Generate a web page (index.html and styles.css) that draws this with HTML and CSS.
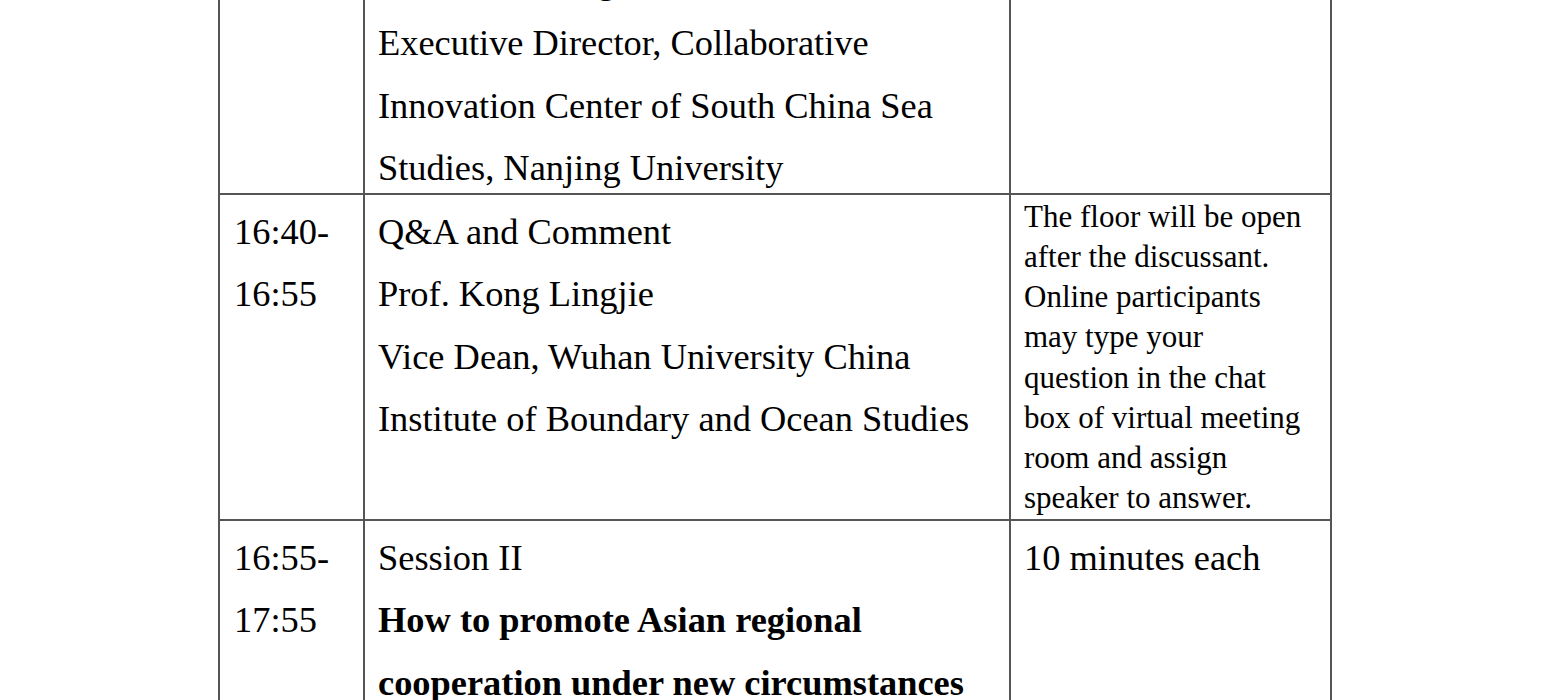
FILE: index.html
```html
<!DOCTYPE html>
<html lang="en">
<head>
<meta charset="utf-8">
<title>Programme</title>
<link rel="stylesheet" href="styles.css">
</head>
<body>
<table class="agenda">
  <colgroup>
    <col class="c-time">
    <col class="c-main">
    <col class="c-note">
  </colgroup>
  <tr>
    <td class="time"><div class="lines">16:25-<br>16:40</div></td>
    <td class="main"><div class="lines">
      <p>Comment by Discussant</p>
      <p>Prof. ZHU Feng</p>
      <p>Executive Director, Collaborative Innovation Center of South China Sea Studies, Nanjing University</p>
    </div></td>
    <td class="note"></td>
  </tr>
  <tr>
    <td class="time"><div class="lines">16:40-<br>16:55</div></td>
    <td class="main"><div class="lines">
      <p>Q&amp;A and Comment</p>
      <p>Prof. Kong Lingjie</p>
      <p>Vice Dean, Wuhan University China Institute of Boundary and Ocean Studies</p>
    </div></td>
    <td class="note small">The floor will be open after the discussant. Online participants may type your question in the chat box of virtual meeting room and assign speaker to answer.</td>
  </tr>
  <tr>
    <td class="time"><div class="lines">16:55-<br>17:55</div></td>
    <td class="main"><div class="lines">
      <p>Session II</p>
      <p class="bold">How to promote Asian regional cooperation under new circumstances</p>
      <p>Chair: Prof. Kong Lingjie</p>
    </div></td>
    <td class="note"><div class="lines">10 minutes each</div></td>
  </tr>
</table>
</body>
</html>
```

FILE: styles.css
```css
html, body {
  margin: 0;
  padding: 0;
  background: #ffffff;
}

body {
  font-family: "Liberation Serif", "Times New Roman", serif;
  color: #000000;
}

.agenda {
  border-collapse: collapse;
  table-layout: fixed;
  width: 1112px;
  margin: -121px auto 0;
}

.c-time { width: 145px; }
.c-main { width: 646px; }
.c-note { width: 321px; }

.agenda td {
  border: 2px solid #555555;
  vertical-align: top;
  padding: 6px 12px 0 13px;
  font-size: 36.4px;
  line-height: 62.5px;
}

.agenda td.time {
  padding-left: 14px;
}

.lines {
  margin-bottom: -7px;
}

.lines p {
  margin: 0;
}

.bold {
  font-weight: bold;
}

.agenda td.small {
  font-size: 31px;
  line-height: 40.25px;
  padding-top: 2px;
  padding-right: 24px;
}
```
